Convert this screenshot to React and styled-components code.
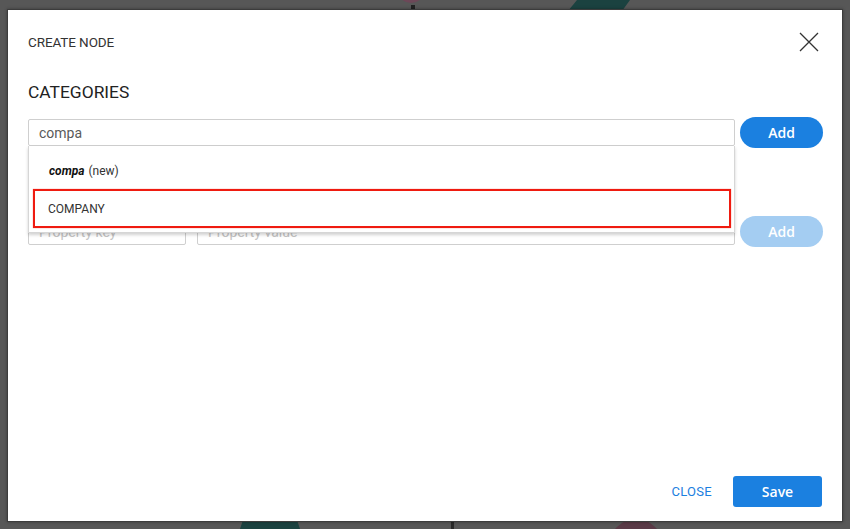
import React from "react";
import styled, { createGlobalStyle } from "styled-components";

const GlobalStyle = createGlobalStyle`
  html, body { margin: 0; padding: 0; background: #575757; }
  body { font-family: Roboto, "Liberation Sans", Arial, sans-serif; }
  * { box-sizing: border-box; }
`;

const Backdrop = styled.div`
  position: relative;
  width: 850px;
  height: 529px;
  overflow: hidden;
  background: #575757;
  padding: 10px 8px 8px 8px;
  display: flex;
`;

const Graph = styled.svg`
  position: absolute;
  inset: 0;
  z-index: 0;
`;

const Modal = styled.div`
  position: relative;
  z-index: 1;
  flex: 1;
  background: #fff;
  box-shadow: 0 0 0 1px #3c3c3c, 0 0 3px 1px rgba(0, 0, 0, 0.35);
  display: flex;
  flex-direction: column;
  padding: 22px 24px 14px 20px;
`;

const Header = styled.div`
  display: flex;
  align-items: center;
  justify-content: space-between;
  height: 20px;
`;

const Title = styled.div`
  font-size: 13.5px;
  color: #333;
  letter-spacing: -0.1px;
`;

const CloseIcon = styled.button`
  border: 0;
  background: none;
  padding: 0;
  width: 20px;
  height: 20px;
  display: flex;
  align-items: center;
  justify-content: center;
  cursor: pointer;
  margin-right: -1px;
`;

const Body = styled.div`
  flex: 1;
  display: flex;
  flex-direction: column;
  padding-top: 30px;
`;

const SectionTitle = styled.div`
  font-size: 17.4px;
  color: #222;
  line-height: 20px;
  margin-bottom: 15px;
`;

const Row = styled.div`
  position: relative;
  display: flex;
  align-items: center;
  gap: ${(p) => p.$gap || 5}px;
  margin-right: -5px;
  margin-bottom: ${(p) => p.$mb || 0}px;
`;

const Field = styled.div`
  position: relative;
  flex: ${(p) => (p.$width ? `0 0 ${p.$width}px` : "1")};
`;

const Input = styled.input`
  width: 100%;
  height: 27px;
  border: 1px solid #cfcfcf;
  border-radius: 2px;
  padding: 0 10px;
  font-family: Roboto, "Liberation Sans", Arial, sans-serif;
  font-size: 14px;
  color: #5a5a5a;
  outline: none;
  background: #fff;
  &::placeholder { color: #c4c4c4; }
`;

const PillButton = styled.button`
  flex: 0 0 83px;
  height: 31px;
  border: 0;
  border-radius: 16px;
  background: ${(p) => (p.disabled ? "#a4cdf2" : "#1b80e0")};
  color: #fff;
  font-family: "Open Sans", Roboto, sans-serif;
  font-weight: 600;
  font-size: 14px;
  cursor: ${(p) => (p.disabled ? "default" : "pointer")};
`;

const Dropdown = styled.div`
  position: absolute;
  left: 0;
  right: 0;
  top: 100%;
  z-index: 5;
  background: #fff;
  border: 1px solid #d6d6d6;
  border-top: 0;
  box-shadow: 0 2px 3px rgba(0, 0, 0, 0.18);
  padding: 4px 3px 4px 4px;
  display: flex;
  flex-direction: column;
`;

const Option = styled.div`
  height: 39px;
  display: flex;
  align-items: center;
  padding-left: ${(p) => (p.$active ? 13 : 16)}px;
  padding-top: ${(p) => (p.$active ? 1 : 2)}px;
  font-size: 12px;
  color: #333;
  border: ${(p) => (p.$active ? "2px solid #ef1b10" : "0")};
  ${(p) => (p.$active ? "box-shadow: 0 0 1px rgba(239,27,16,0.6);" : "")}
`;

const NewTag = styled.span`
  font-weight: 700;
  font-style: italic;
  color: #111;
  margin-right: 4px;
`;

const Footer = styled.div`
  display: flex;
  justify-content: flex-end;
  align-items: center;
  gap: 21px;
  margin-right: -4px;
`;

const TextButton = styled.button`
  border: 0;
  background: none;
  padding: 0;
  color: #1b80e0;
  font-family: Roboto, "Liberation Sans", Arial, sans-serif;
  font-size: 13px;
  letter-spacing: 0.3px;
  cursor: pointer;
`;

const SaveButton = styled.button`
  width: 89px;
  height: 31px;
  border: 0;
  border-radius: 3px;
  background: #1b80e0;
  color: #fff;
  font-family: "Open Sans", Roboto, sans-serif;
  font-weight: 600;
  font-size: 14px;
  cursor: pointer;
`;

export default function App() {
  return (
    <>
      <GlobalStyle />
      <Backdrop>
        <Graph width="850" height="529" viewBox="0 0 850 529">
          <circle cx="411" cy="-11" r="14" fill="#6d4858" />
          <rect x="411" y="5" width="4" height="6" fill="#222" />
          <polygon points="568,11 577,0 630,0 622,11" fill="#1b4240" />
          <polygon points="243,520 297,520 300,529 240,529" fill="#1b4240" />
          <rect x="451" y="520" width="3" height="9" fill="#2a2a2a" />
          <circle cx="636" cy="546" r="27" fill="#5a3a47" />
        </Graph>
        <Modal>
          <Header>
            <Title>CREATE NODE</Title>
            <CloseIcon aria-label="close">
              <svg width="20" height="20" viewBox="0 0 20 20">
                <path d="M1 1 L19 19 M19 1 L1 19" stroke="#333" strokeWidth="1.3" fill="none" />
              </svg>
            </CloseIcon>
          </Header>
          <Body>
            <SectionTitle>CATEGORIES</SectionTitle>
            <Row $mb={68}>
              <Field>
                <Input defaultValue="compa" />
                <Dropdown>
                  <Option>
                    <NewTag>compa</NewTag>(new)
                  </Option>
                  <Option $active>COMPANY</Option>
                </Dropdown>
              </Field>
              <PillButton>Add</PillButton>
            </Row>
            <Row $gap={5}>
              <Field $width={158}>
                <Input placeholder="Property key" />
              </Field>
              <Field style={{ marginLeft: 6 }}>
                <Input placeholder="Property value" />
              </Field>
              <PillButton disabled>Add</PillButton>
            </Row>
          </Body>
          <Footer>
            <TextButton>CLOSE</TextButton>
            <SaveButton>Save</SaveButton>
          </Footer>
        </Modal>
      </Backdrop>
    </>
  );
}
